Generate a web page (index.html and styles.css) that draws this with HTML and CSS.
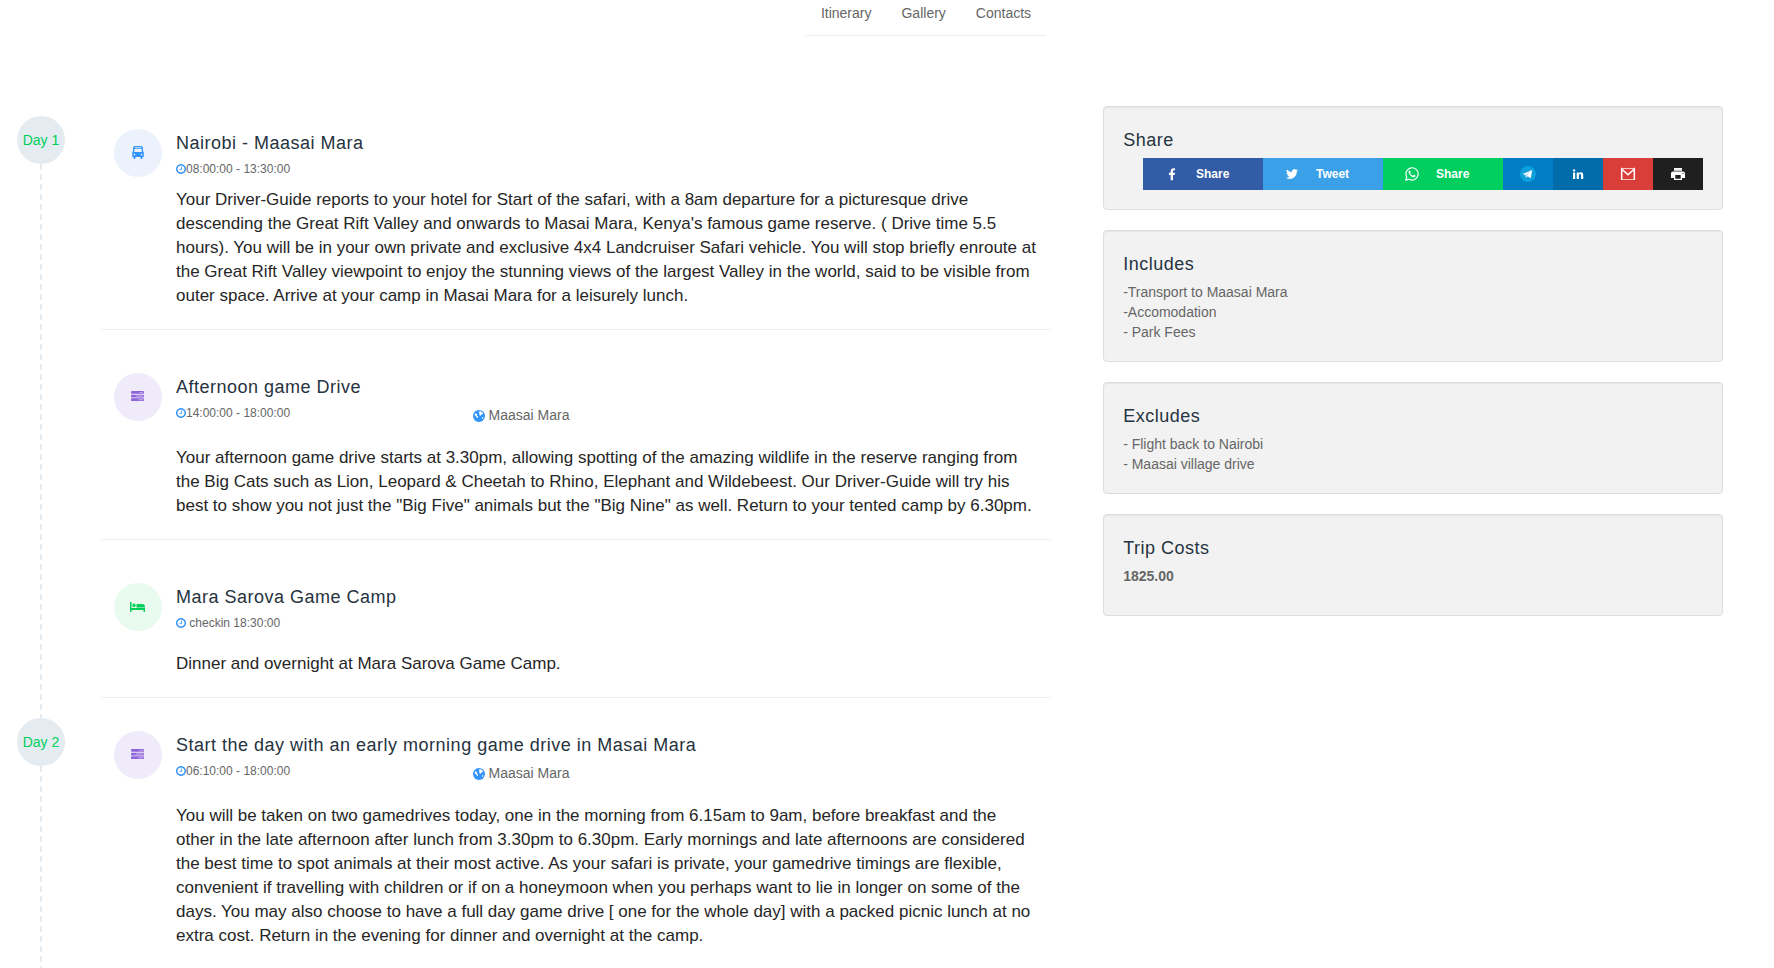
FILE: index.html
```
<!DOCTYPE html>
<html lang="en">
<head>
    <meta charset="UTF-8">
    <meta name="viewport" content="width=device-width, initial-scale=1.0">
    <title>Maasai Mara Safari</title>
    <link rel="stylesheet" href="styles.css">
</head>
<body>
    <!-- Icons used more than once -->
    <svg class="sprite" aria-hidden="true">
        <symbol id="icon-clock" viewBox="0 128 1536 1536">
            <path d="M896 544v448q0 14-9 23t-23 9h-320q-14 0-23-9t-9-23v-64q0-14 9-23t23-9h224v-352q0-14 9-23t23-9h64q14 0 23 9t9 23zm416 352q0-148-73-273t-198-198-273-73-273 73-198 198-73 273 73 273 198 198 273 73 273-73 198-198 73-273zm224 0q0 209-103 385.5t-279.5 279.5-385.5 103-385.5-103-279.5-279.5-103-385.5 103-385.5 279.5-279.5 385.5-103 385.5 103 279.5 279.5 103 385.5z"/>
        </symbol>
        <symbol id="icon-globe" viewBox="0 0 24 24">
            <circle cx="12" cy="12" r="12"/>
            <path fill="#fff" d="M11.500 3l3.500-.5 4.500 3 .5 2.500-3 1-2 2.500-2.500-1.500.5-2.500zM3.500 7.500l2-1 3 2.500-1 2.500 3 2-1.500 3-2.500-3-2.500-2.500zM18.500 14.500l2.500-1-1.500 4-1.500 1z"/>
        </symbol>
        <symbol id="icon-tasks" viewBox="0 0 14 12">
            <rect width="14" height="3" rx=".5"/>
            <rect y="4" width="14" height="3" rx=".5"/>
            <rect y="8" width="14" height="3" rx=".5"/>
            <path fill="#efebfa" opacity=".6" d="M9 1h4v1H9zM5 5h8v1H5zM8 9h5v1H8z"/>
        </symbol>
    </svg>

    <nav class="top-nav">
        <ul>
            <li><a href="#itinerary">Itinerary</a></li>
            <li><a href="#gallery">Gallery</a></li>
            <li><a href="#contacts">Contacts</a></li>
        </ul>
    </nav>

    <div class="page">
        <main class="itinerary" id="itinerary">
            <!-- Day 1 -->
            <section class="day">
                <div class="day-marker"><span class="day-label">Day 1</span></div>
                <div class="day-items">
                    <article class="item">
                        <div class="item-icon blue">
                            <svg width="12" height="13" viewBox="0 0 24 26"><path fill-rule="evenodd" d="M7 0h10c3 0 5 1.500 5 4v6l1.500 3v9H21v2c0 2.500-4 2.500-4 0v-2H7v2c0 2.500-4 2.500-4 0v-2H.5v-9L2 10V4c0-2.500 2-4 5-4zM6 2v1.500h12V2zM4.500 5.500v6.500h15V5.500zM5 15.500a1.500 1.500 0 1 0 .01 0zM19 15.500a1.500 1.500 0 1 0 .01 0z"/></svg>
                        </div>
                        <div class="item-body">
                            <h3>Nairobi - Maasai Mara</h3>
                            <div class="meta">
                                <span class="time"><svg><use href="#icon-clock"/></svg>08:00:00 - 13:30:00</span>
                            </div>
                            <p class="compact">Your Driver-Guide reports to your hotel for Start of the safari, with a 8am departure for a picturesque drive descending the Great Rift Valley and onwards to Masai Mara, Kenya's famous game reserve. ( Drive time 5.5 hours). You will be in your own private and exclusive 4x4 Landcruiser Safari vehicle. You will stop briefly enroute at the Great Rift Valley viewpoint to enjoy the stunning views of the largest Valley in the world, said to be visible from outer space. Arrive at your camp in Masai Mara for a leisurely lunch.</p>
                        </div>
                    </article>

                    <article class="item">
                        <div class="item-icon purple">
                            <svg width="13" height="11"><use href="#icon-tasks"/></svg>
                        </div>
                        <div class="item-body">
                            <h3>Afternoon game Drive</h3>
                            <div class="meta">
                                <span class="time"><svg><use href="#icon-clock"/></svg>14:00:00 - 18:00:00</span>
                                <span class="place"><svg><use href="#icon-globe"/></svg> Maasai Mara</span>
                            </div>
                            <p>Your afternoon game drive starts at 3.30pm, allowing spotting of the amazing wildlife in the reserve ranging from the Big Cats such as Lion, Leopard &amp; Cheetah to Rhino, Elephant and Wildebeest. Our Driver-Guide will try his best to show you not just the "Big Five" animals but the "Big Nine" as well. Return to your tented camp by 6.30pm.</p>
                        </div>
                    </article>

                    <article class="item">
                        <div class="item-icon green">
                            <svg width="15" height="10" viewBox="0 0 30 20"><path d="M0 0h3v12h27v8h-3v-4H3v4H0zM8 3a3.500 3.500 0 1 1-.01 0zM13 4h11c4 0 6 2 6 7H13z"/></svg>
                        </div>
                        <div class="item-body">
                            <h3>Mara Sarova Game Camp</h3>
                            <div class="meta">
                                <span class="time"><svg><use href="#icon-clock"/></svg> checkin 18:30:00</span>
                            </div>
                            <p>Dinner and overnight at Mara Sarova Game Camp.</p>
                        </div>
                    </article>
                </div>
            </section>

            <!-- Day 2 -->
            <section class="day">
                <div class="day-marker"><span class="day-label">Day 2</span></div>
                <div class="day-items">
                    <article class="item">
                        <div class="item-icon purple">
                            <svg width="13" height="11"><use href="#icon-tasks"/></svg>
                        </div>
                        <div class="item-body">
                            <h3>Start the day with an early morning game drive in Masai Mara</h3>
                            <div class="meta">
                                <span class="time"><svg><use href="#icon-clock"/></svg>06:10:00 - 18:00:00</span>
                                <span class="place"><svg><use href="#icon-globe"/></svg> Maasai Mara</span>
                            </div>
                            <p>You will be taken on two gamedrives today, one in the morning from 6.15am to 9am, before breakfast and the other in the late afternoon after lunch from 3.30pm to 6.30pm. Early mornings and late afternoons are considered the best time to spot animals at their most active. As your safari is private, your gamedrive timings are flexible, convenient if travelling with children or if on a honeymoon when you perhaps want to lie in longer on some of the days. You may also choose to have a full day game drive [ one for the whole day] with a packed picnic lunch at no extra cost. Return in the evening for dinner and overnight at the camp.</p>
                        </div>
                    </article>
                </div>
            </section>
        </main>

        <aside class="sidebar">
            <div class="card">
                <h3>Share</h3>
                <div class="share-buttons">
                    <button type="button" class="share wide facebook">
                        <svg viewBox="0 0 16 16"><path d="M6.500 15V9H4.500V6.500h2V5c0-2.300 1.300-3.500 3.200-3.500l1.800.1v2.200h-1.200c-1 0-1.200.5-1.200 1.200v1.500h2.300L11.100 9h-2v6z"/></svg>
                        <span>Share</span>
                    </button>
                    <button type="button" class="share wide twitter">
                        <svg viewBox="0 0 28 28"><path transform="translate(2 2)" d="M24 4.600a10 10 0 0 1-2.800.8 5 5 0 0 0 2.100-2.700 10 10 0 0 1-3.100 1.200 4.900 4.900 0 0 0-8.400 4.500A14 14 0 0 1 1.700 3.200a4.900 4.900 0 0 0 1.500 6.500 4.900 4.900 0 0 1-2.200-.6 4.900 4.900 0 0 0 3.900 4.900 5 5 0 0 1-2.200.1 4.900 4.900 0 0 0 4.600 3.400A9.900 9.900 0 0 1 0 19.500a14 14 0 0 0 21.500-12.400A10 10 0 0 0 24 4.600z"/></svg>
                        <span>Tweet</span>
                    </button>
                    <button type="button" class="share wide whatsapp">
                        <svg viewBox="0 0 24 24"><path fill="none" stroke="#fff" stroke-width="2" d="M1.500 22.500l1.500-5.500a10.500 10.500 0 1 1 4 4z"/><path d="M8.500 6.500c-.3-.6-1.200-.6-1.700 0-1.500 1.700-.9 4 1.700 7 3 3.400 5.700 4.600 8 3.700 1.300-.6 1.600-1.700 1.500-2.500l-3-1.500-1.500 1.800c-2-.8-3.600-2.200-4.600-4.200l1-1.500z"/></svg>
                        <span>Share</span>
                    </button>
                    <button type="button" class="share telegram" aria-label="Telegram">
                        <svg viewBox="0 0 16 16"><circle cx="8" cy="8" r="8" fill="#0d9fdb"/><path d="M2.500 8l9.700-3.900-1.500 8.200-3-2-1.700 1.500-.6-2.800z"/><path fill="#a9d4ec" d="M5.400 9l5-3.700L7 9.500l-1 2.300z"/></svg>
                    </button>
                    <button type="button" class="share linkedin" aria-label="LinkedIn">
                        <svg viewBox="0 0 16 16"><path d="M3 6.500h2.200V13H3zM4.100 3.200a1.200 1.200 0 1 1-.01 0zM6.700 6.500h2v.9c.4-.7 1.100-1.100 2-1.100 2 0 2.500 1.200 2.500 3V13H11V9.700c0-.9-.1-1.700-1-1.700s-1.100.8-1.100 1.600V13H6.700z"/></svg>
                    </button>
                    <button type="button" class="share email" aria-label="Email">
                        <svg viewBox="0 0 16 16"><path fill="none" stroke="#fff" opacity=".7" d="M1.500 2.500h13v11h-13z"/><path fill="none" stroke="#fff" stroke-width="1.500" d="M1.700 14V3L8 8.800 14.300 3v11"/></svg>
                    </button>
                    <button type="button" class="share print" aria-label="Print">
                        <svg viewBox="0 0 16 16"><path fill="#ccc" d="M4 2h8v3H4z"/><path fill-rule="evenodd" d="M4 2h8v1.500H4zM3 5.500h10a2 2 0 0 1 2 2V12h-3v2H4v-2H1V7.500a2 2 0 0 1 2-2zM5.300 9v3.700h5.400V9zM12.500 7v1h1V7z"/></svg>
                    </button>
                </div>
            </div>

            <div class="card">
                <h3>Includes</h3>
                <ul>
                    <li>-Transport to Maasai Mara</li>
                    <li>-Accomodation</li>
                    <li>- Park Fees</li>
                </ul>
            </div>

            <div class="card">
                <h3>Excludes</h3>
                <ul>
                    <li>- Flight back to Nairobi</li>
                    <li>- Maasai village drive</li>
                </ul>
            </div>

            <div class="card">
                <h3>Trip Costs</h3>
                <p class="cost">1825.00</p>
            </div>
        </aside>
    </div>
</body>
</html>
```

FILE: styles.css
```
* {
    box-sizing: border-box;
}

body {
    margin: 0;
    font-family: "Helvetica Neue", Helvetica, "Liberation Sans", Arial, sans-serif;
    font-size: 14px;
    line-height: 20px;
    color: #666;
    background-color: #fff;
}

h3 {
    margin: 0;
    font-size: 18px;
    font-weight: 400;
    line-height: 28px;
    letter-spacing: 0.5px;
    color: #263340;
}

ul {
    margin: 0;
    padding: 0;
    list-style: none;
}

svg {
    fill: currentColor;
}

.sprite {
    display: none;
}

/* Top navigation */
.top-nav {
    display: flex;
    justify-content: center;
    padding-left: 78px;
}

.top-nav ul {
    display: flex;
    gap: 30px;
    padding: 3px 15px 12px;
    border-bottom: 1px solid #eee;
}

.top-nav a {
    color: #666;
    text-decoration: none;
}

/* Two columns: itinerary and sidebar */
.page {
    display: grid;
    grid-template-columns: 5fr 3fr;
    gap: 53px;
    align-items: start;
    padding: 70px 51px 0 17px;
}

.itinerary {
    padding-top: 10px;
}

.day {
    display: flex;
    gap: 37px;
}

.day-marker {
    display: flex;
    flex-direction: column;
    align-items: center;
    width: 48px;
}

.day-marker::after {
    content: "";
    flex: 1;
    width: 2px;
    background: repeating-linear-gradient(#e4ebf1 0 6px, transparent 6px 10px);
}

.day-label {
    width: 48px;
    height: 48px;
    border-radius: 50%;
    background-color: #e4ebf1;
    color: #00d05a;
    line-height: 48px;
    text-align: center;
    white-space: nowrap;
}

.day-items {
    flex: 1;
    display: flex;
    flex-direction: column;
    gap: 43px;
    padding: 13px 0 20px;
}

.item {
    display: flex;
    gap: 14px;
    padding: 0 12px 21px 12px;
    border-bottom: 1px solid #eee;
}

.item-icon {
    display: flex;
    flex-shrink: 0;
    align-items: center;
    justify-content: center;
    width: 48px;
    height: 48px;
    padding: 0 1px 1px 0;
    border-radius: 50%;
}

.item-icon.blue {
    background-color: #ebf2fc;
    color: #3294fb;
}

.item-icon.purple {
    background-color: #efebfa;
    color: #8e63d8;
}

.item-icon.green {
    background-color: #e9faee;
    color: #00d05a;
}

.item-body {
    flex: 1;
}

.item-body p {
    margin: 17px 0 0;
    font-size: 17px;
    line-height: 24px;
    color: #262626;
}

.item-body p.compact {
    margin-top: 7px;
}

.meta {
    display: grid;
    grid-template-columns: 1fr 2fr;
    gap: 14px;
    align-items: start;
}

.meta svg {
    color: #3294fb;
}

.time {
    font-size: 12px;
    line-height: 24px;
}

.time svg {
    width: 10px;
    height: 10px;
    vertical-align: -1px;
}

.place {
    line-height: 28px;
}

.place svg {
    width: 12px;
    height: 12px;
    vertical-align: -2px;
}

/* Sidebar */
.sidebar {
    display: flex;
    flex-direction: column;
    gap: 20px;
}

.card {
    padding: 19px;
    border: 1px solid #ddd;
    border-radius: 4px;
    background-color: #f2f2f2;
    box-shadow: inset 0 1px 1px rgba(0, 0, 0, 0.05);
}

.card h3 {
    margin-bottom: 4px;
}

.cost {
    margin: 0 0 10px;
    font-weight: 700;
}

.share-buttons {
    display: flex;
    justify-content: flex-end;
}

.share {
    display: flex;
    align-items: center;
    justify-content: center;
    width: 50px;
    height: 32px;
    padding: 0;
    border: none;
    color: #fff;
    font-family: inherit;
    font-size: 12px;
    font-weight: 700;
    cursor: pointer;
}

.share svg {
    width: 16px;
    height: 16px;
}

.share.wide {
    justify-content: flex-start;
    gap: 16px;
    width: 120px;
    padding-left: 21px;
}

.share.wide svg {
    width: 16px;
    height: 14px;
}

.facebook {
    background-color: #335ca6;
}

.twitter {
    background-color: #3aa1e9;
}

.whatsapp {
    background-color: #00cf60;
}

.telegram {
    background-color: #007dc5;
}

.linkedin {
    background-color: #006daa;
}

.email {
    background-color: #d93e38;
}

.print {
    background-color: #1f1f1f;
}
```
